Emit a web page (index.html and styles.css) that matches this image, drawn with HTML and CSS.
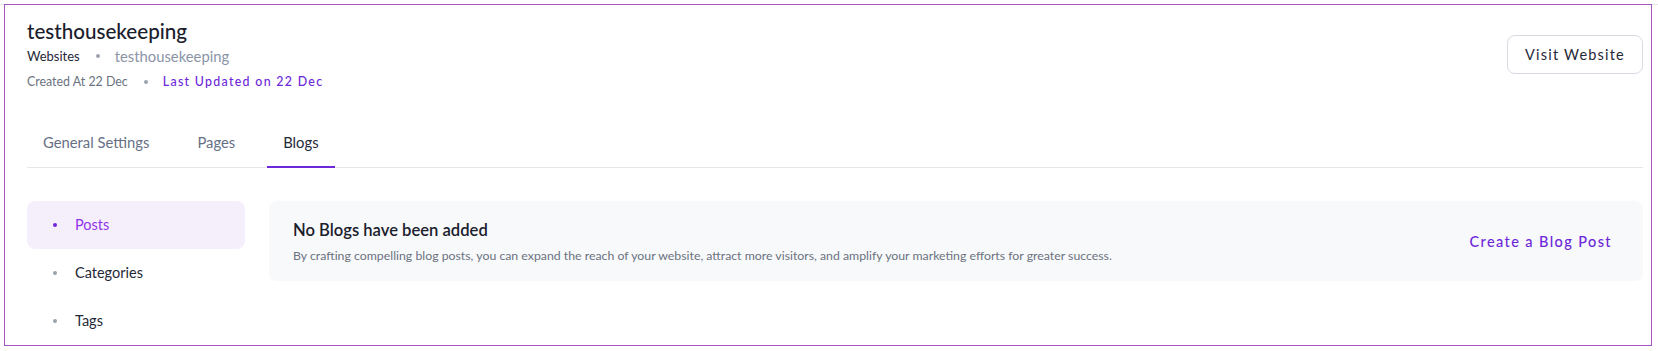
FILE: index.html
```html
<!DOCTYPE html>
<html>
<head>
    <title>testhousekeeping - Blogs</title>
    <link rel="stylesheet" href="styles.css">
</head>
<body>
    <div class="topbar"></div>
    <div class="frame">
        <header class="site-header">
            <div class="site-info">
                <h1>testhousekeeping</h1>
                <div class="crumbs">
                    <span class="crumb-parent">Websites</span>
                    <span class="dot"></span>
                    <span class="crumb-current">testhousekeeping</span>
                </div>
                <div class="dates">
                    <span>Created At 22 Dec</span>
                    <span class="dot"></span>
                    <span class="updated">Last Updated on 22 Dec</span>
                </div>
            </div>
            <button class="visit-btn">Visit Website</button>
        </header>

        <nav class="tabs">
            <a class="tab">General Settings</a>
            <a class="tab">Pages</a>
            <a class="tab active">Blogs</a>
        </nav>

        <div class="blog-body">
            <ul class="side-menu">
                <li class="side-item active"><span class="bullet"></span>Posts</li>
                <li class="side-item"><span class="bullet"></span>Categories</li>
                <li class="side-item"><span class="bullet"></span>Tags</li>
            </ul>

            <div class="empty-card">
                <div class="empty-text">
                    <h2>No Blogs have been added</h2>
                    <p>By crafting compelling blog posts, you can expand the reach of your website, attract more visitors, and amplify your marketing efforts for greater success.</p>
                </div>
                <a class="create-link">Create a Blog Post</a>
            </div>
        </div>
    </div>
</body>
</html>
```

FILE: styles.css
```css
body {
    margin: 0;
    font-family: Lato, "Open Sans", sans-serif;
    color: #1f2937;
    background: #fff;
}
.topbar {
    height: 4px;
    border-bottom: 1px solid #e5e5e5;
}
.frame {
    box-sizing: border-box;
    height: 342px;
    margin: -1px 6px 0 4px;
    padding: 12px 8px 0 22px;
    border: 1px solid #a855c0;
    overflow: hidden;
    background: #fff;
}
.site-header {
    display: flex;
    justify-content: space-between;
    align-items: center;
}
.site-info h1 {
    margin: 0;
    font-size: 20.6px;
    line-height: 28px;
    font-weight: 500;
    color: #1a202c;
}
.crumbs,
.dates {
    display: flex;
    align-items: center;
}
.crumbs {
    margin-top: 1px;
    line-height: 20px;
}
.crumb-parent {
    font-size: 13px;
    color: #1f2937;
}
.crumb-current {
    font-size: 14.8px;
    color: #8a94a6;
}
.dates {
    margin-top: 7px;
    font-size: 12.4px;
    line-height: 18px;
    color: #6b7280;
}
.dot {
    width: 4px;
    height: 4px;
    border-radius: 50%;
    background: #9ca3af;
    margin: 0 15px 0 16px;
}
.updated {
    color: #6d28d9;
    letter-spacing: 1.3px;
    font-weight: 500;
}
.visit-btn {
    width: 136px;
    height: 39px;
    border: 1px solid #d9dbe3;
    border-radius: 8px;
    background: #fff;
    font-family: inherit;
    font-size: 14.5px;
    letter-spacing: 1.2px;
    color: #1f2937;
    cursor: pointer;
}
.tabs {
    display: flex;
    gap: 16px;
    margin-top: 29px;
    border-bottom: 1px solid #e5e7eb;
}
.tab {
    padding: 12px 16px 14px;
    font-size: 14.8px;
    line-height: 20px;
    color: #667085;
    border-bottom: 2px solid transparent;
    margin-bottom: -1px;
    cursor: pointer;
}
.tab.active {
    color: #1f2937;
    border-bottom-color: #6d28d9;
}
.blog-body {
    display: flex;
    gap: 24px;
    margin-top: 33px;
    align-items: flex-start;
}
.side-menu {
    list-style: none;
    margin: 0;
    padding: 0;
    width: 218px;
    flex-shrink: 0;
}
.side-item {
    display: flex;
    align-items: center;
    height: 48px;
    padding-left: 26px;
    padding-bottom: 1px;
    box-sizing: border-box;
    border-radius: 8px;
    font-size: 14.5px;
    color: #1f2937;
}
.side-item .bullet {
    width: 4px;
    height: 4px;
    border-radius: 50%;
    background: #9ca3af;
    margin-right: 18px;
}
.side-item.active {
    background: #f5effc;
    color: #9333ea;
}
.side-item.active .bullet {
    background: #6d28d9;
}
.empty-card {
    flex: 1;
    display: flex;
    justify-content: space-between;
    align-items: center;
    height: 80px;
    box-sizing: border-box;
    padding: 0 31px 0 24px;
    background: #f8f9fb;
    border-radius: 8px;
}
.empty-text h2 {
    margin: 0;
    font-size: 16.6px;
    line-height: 24px;
    font-weight: 600;
    color: #1a202c;
}
.empty-text p {
    margin: 5px 0 0;
    font-size: 12.3px;
    line-height: 18px;
    color: #6b7280;
}
.create-link {
    font-size: 14.5px;
    letter-spacing: 1.4px;
    font-weight: 500;
    color: #6d28d9;
    cursor: pointer;
}
```
